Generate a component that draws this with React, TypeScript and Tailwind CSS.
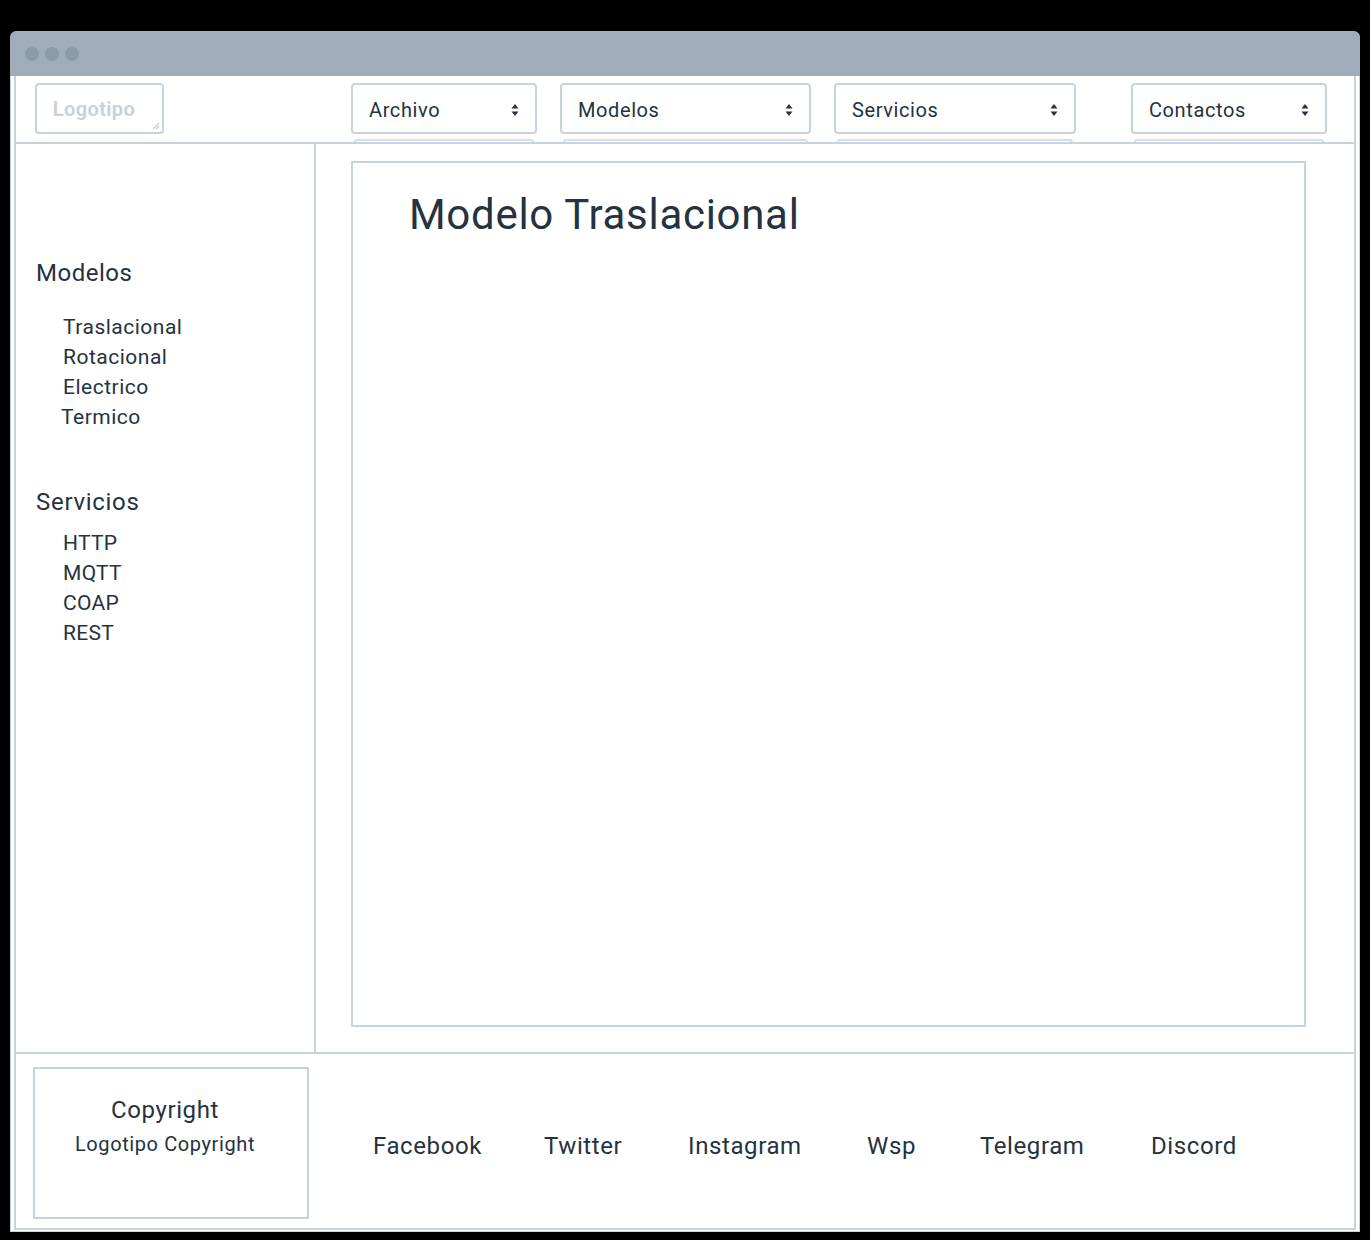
import React from 'react';

const font = { fontFamily: 'Roboto, "Noto Sans", sans-serif' };

function Arrows() {
  return (
    <svg width="8" height="14" viewBox="0 0 8 14" className="shrink-0">
      <path d="M4 1 L7.5 5.5 L0.5 5.5 Z" fill="#25323f" />
      <path d="M4 13 L7.5 8.5 L0.5 8.5 Z" fill="#25323f" />
    </svg>
  );
}

function Select({ label, width }: { label: string; width: string }) {
  return (
    <div className={`flex flex-col ${width}`}>
      <div className="h-[51px] border-2 border-[#c9d3dc] rounded-[4px] bg-white flex items-center justify-between pl-[16px] pr-[16px] pt-[2px]">
        <span className="text-[20px] tracking-[0.6px] text-[#25323f]">{label}</span>
        <Arrows />
      </div>
      <div className="mx-[3px] mt-[5px] h-[4px] border-t-2 border-x-2 border-[#d7dfe6] rounded-t-[3px]" />
    </div>
  );
}

export default function App() {
  const modelos = ['Traslacional', 'Rotacional', 'Electrico', 'Termico'];
  const servicios = ['HTTP', 'MQTT', 'COAP', 'REST'];
  const links = [
    { name: 'Facebook', w: 'w-[171px]' },
    { name: 'Twitter', w: 'w-[144px]' },
    { name: 'Instagram', w: 'w-[179px]' },
    { name: 'Wsp', w: 'w-[113px]' },
    { name: 'Telegram', w: 'w-[171px]' },
    { name: 'Discord', w: 'w-[120px]' }
  ];

  return (
    <div className="bg-black w-[1370px] h-[1240px] pt-[31px] pl-[10px]" style={font}>
      <div className="w-[1350px]">
        {/* title bar */}
        <div className="h-[45px] bg-[#9eadb9] rounded-t-[6px] flex items-center gap-[6px] pl-[15px]">
          <div className="w-[14px] h-[14px] rounded-full bg-[#8b9ba8]" />
          <div className="w-[14px] h-[14px] rounded-full bg-[#8b9ba8]" />
          <div className="w-[14px] h-[14px] rounded-full bg-[#8b9ba8]" />
        </div>

        <div className="bg-white border-x border-b border-[#c9d3dc] px-[3px] pb-[1px]">
          <div className="border-x-2 border-b-2 border-[#c9d3dc]">
            {/* header */}
            <div className="h-[68px] border-b-2 border-[#c9d3dc] flex items-start pt-[7px] pl-[19px] overflow-hidden">
              <div className="relative w-[129px] h-[51px] border-2 border-[#c9d3dc] rounded-[4px] flex items-center justify-center">
                <span className="text-[20px] tracking-[0.4px] font-semibold text-[#c6d1db] -ml-[11px]">Logotipo</span>
                <svg className="absolute right-[2px] bottom-[2px]" width="10" height="10" viewBox="0 0 10 10">
                  <path d="M9 3 L3 9 M9 6 L6 9" stroke="#c6d1db" strokeWidth="1.3" />
                </svg>
              </div>
              <div className="ml-[187px] flex">
                <Select label="Archivo" width="w-[186px]" />
                <div className="w-[23px]" />
                <Select label="Modelos" width="w-[251px]" />
                <div className="w-[23px]" />
                <Select label="Servicios" width="w-[242px]" />
                <div className="w-[55px]" />
                <Select label="Contactos" width="w-[196px]" />
              </div>
            </div>

            {/* middle */}
            <div className="h-[910px] border-b-2 border-[#c9d3dc] flex">
              <aside className="w-[300px] border-r-2 border-[#c9d3dc] pl-[20px] pt-[114px] text-[#25323f]">
                <h3 className="text-[24px] leading-[30px] tracking-[0.5px]">Modelos</h3>
                <ul className="mt-[24px] pl-[27px] text-[21px] tracking-[0.5px] leading-[30px]">
                  {modelos.map((m, i) => (
                    <li key={m} className={i === 3 ? '-ml-[2px]' : ''}>{m}</li>
                  ))}
                </ul>
                <h3 className="mt-[55px] text-[24px] leading-[30px] tracking-[0.7px]">Servicios</h3>
                <ul className="mt-[11px] pl-[27px] text-[21px] tracking-[0.3px] leading-[30px]">
                  {servicios.map((s) => (
                    <li key={s}>{s}</li>
                  ))}
                </ul>
              </aside>
              <main className="flex-1 pl-[35px] pr-[48px] pt-[17px] pb-[25px]">
                <div className="h-full border-2 border-[#c9d3dc] pl-[56px] pt-[25px]">
                  <h1 className="text-[42px] leading-[54px] tracking-[0.7px] text-[#25323f]">Modelo Traslacional</h1>
                </div>
              </main>
            </div>

            {/* footer */}
            <div className="h-[174px] flex items-start pl-[17px] pt-[13px] text-[#25323f]">
              <div className="w-[276px] h-[152px] border-2 border-[#c9d3dc] flex flex-col items-center pt-[25px] pr-[12px]">
                <span className="text-[24px] leading-[32px] tracking-[0.6px]">Copyright</span>
                <span className="text-[20px] leading-[28px] mt-[4px] tracking-[0.6px]">Logotipo Copyright</span>
              </div>
              <div className="ml-[64px] flex h-[152px] items-center pt-[6px]">
                {links.map((l) => (
                  <span key={l.name} className={`${l.w} text-[24px] tracking-[0.6px]`}>{l.name}</span>
                ))}
              </div>
            </div>
          </div>
        </div>
      </div>
    </div>
  );
}
